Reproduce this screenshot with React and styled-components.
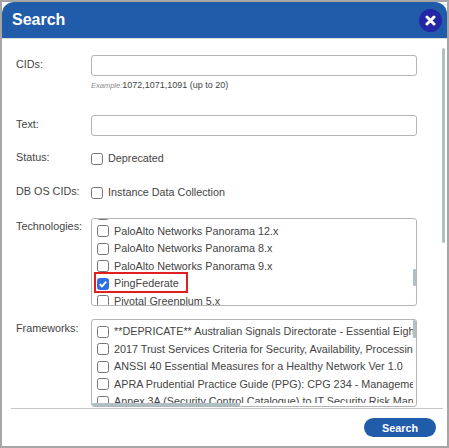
import styled, {createGlobalStyle} from 'styled-components';

const Global = createGlobalStyle`
  html, body { margin: 0; padding: 0; background: #fff; }
  body { font-family: "Liberation Sans", Arial, sans-serif; color: #444; }
`;

/* ---------- frame ---------- */
const Frame = styled.div`
  width: 449px; height: 448px; box-sizing: border-box;
  border: 2px solid #a6a6a6; background: #fff;
  display: flex; flex-direction: column; overflow: hidden;
`;
const Header = styled.header`
  height: 36px; flex: none; background: #205ca9;
  border-radius: 12px 12px 0 0; border-bottom: 1px solid #d9dee5;
  display: flex; align-items: center; justify-content: space-between;
  padding: 0 5px 0 10px;
`;
const Title = styled.h1`
  margin: 0; font-size: 16px; font-weight: 700; color: #fff;
`;
const Close = styled.button`
  width: 23px; height: 23px; padding: 0; border: none; border-radius: 50%;
  background: #2327a3; display: flex; align-items: center; justify-content: center;
`;

/* ---------- body ---------- */
const Body = styled.div`
  flex: 1; position: relative; overflow: hidden;
  padding: 16px 0 0 14px;
  display: flex; flex-direction: column;
`;
const PageThumb = styled.div`
  position: absolute; right: 2px; top: 9px;
  width: 3px; height: 195px; border-radius: 2px; background: #b0bec5;
`;
const Row = styled.div`
  display: flex; align-items: flex-start; height: ${p => p.$h}px; flex: none;
`;
const Label = styled.label`
  width: 75px; flex: none; font-size: 10.8px; line-height: 13px;
  padding-top: ${p => p.$top || 0}px; color: #444;
`;
const Field = styled.div`
  width: 326px; display: flex; flex-direction: column;
`;
const Input = styled.input`
  box-sizing: border-box; width: 326px; height: 21px;
  border: 1px solid #b5b5b5; border-radius: 3px; background: #fff; outline: none;
`;
const Hint = styled.div`
  margin-top: 4px; font-size: 9px; line-height: 11px; color: #444;
  em { font-size: 7.5px; color: #8a8a8a; }
`;
const Check = styled.label`
  display: flex; align-items: center; gap: 5px; font-size: 10.8px; line-height: 13px; color: #444;
  white-space: nowrap; height: ${p => p.$h || 17.5}px; flex: none;
`;
const Box = styled.span`
  width: 12px; height: 12px; box-sizing: border-box; flex: none;
  border: 1px solid #767676; border-radius: 2.5px; background: #fff;
  display: flex; align-items: center; justify-content: center;
  ${p => p.$on && 'background:#2f6fe4;border-color:#2f6fe4;'}
`;
const List = styled.div`
  box-sizing: border-box; width: 326px; height: 88px;
  border: 1px solid #b5b5b5; border-radius: 3px; background: #fff;
  position: relative; overflow: hidden;
  display: flex; flex-direction: column;
`;
/* the part of a list that is left beside its scrollbars */
const Viewport = styled.div`
  flex: 1; min-height: 0; overflow: hidden;
  margin: 0 3px ${p => p.$hbar ? 3 : 0}px 0;
  padding: ${p => p.$top}px 0 0 5px;
`;
const Clipped = styled(Check)`
  margin-top: -14.25px;
`;
const Thumb = styled.div`
  position: absolute; background: #b0bec5; border-radius: 1px;
  ${p => p.$h ? `right:0;top:${p.$top}px;width:3px;height:${p.$h}px;` : `left:0;bottom:0;height:3px;width:${p.$w}px;`}
`;
const Marker = styled.div`
  position: absolute; left: 2px; top: 53px; width: 94px; height: 21px;
  box-sizing: border-box; border: 2px solid #e0201f;
`;

/* ---------- footer ---------- */
const Footer = styled.footer`
  height: 38px; flex: none; margin: 0 4px 0 9px;
  border-top: 1px solid #c9c9c9; box-sizing: border-box;
  display: flex; justify-content: flex-end; align-items: flex-start;
  padding: 9px 7px 0 0;
`;
const SearchBtn = styled.button`
  width: 72px; height: 19px; padding: 0; border: none; border-radius: 10px;
  background: #205ca9; color: #fff; font: 700 10.8px "Liberation Sans", Arial, sans-serif;
`;

const tech = [
  'PaloAlto Networks Panorama 12.x',
  'PaloAlto Networks Panorama 8.x',
  'PaloAlto Networks Panorama 9.x',
  'PingFederate',
  'Pivotal Greenplum 5.x',
];
const frameworks = [
  '**DEPRICATE** Australian Signals Directorate - Essential Eight',
  '2017 Trust Services Criteria for Security, Availability, Processing Integrity',
  'ANSSI 40 Essential Measures for a Healthy Network Ver 1.0',
  'APRA Prudential Practice Guide (PPG): CPG 234 - Management of Security Risk',
  'Annex 3A (Security Control Catalogue) to IT Security Risk Management',
];

const Tick = () => (
  <svg width="10" height="10" viewBox="0 0 10 10">
    <path d="M1.8 5.2 4 7.4 8.2 2.6" fill="none" stroke="#fff" strokeWidth="1.8"/>
  </svg>
);

export default function App() {
  return (
    <Frame>
      <Global/>
      <Header>
        <Title>Search</Title>
        <Close aria-label="Close">
          <svg width="11" height="11" viewBox="0 0 11 11">
            <path d="M2 2 9 9M9 2 2 9" stroke="#fff" strokeWidth="3" strokeLinecap="round"/>
          </svg>
        </Close>
      </Header>
      <Body>
        <PageThumb/>
        <Row $h={60}>
          <Label $top={3}>CIDs:</Label>
          <Field>
            <Input/>
            <Hint><em>Example:</em>1072,1071,1091 (up to 20)</Hint>
          </Field>
        </Row>
        <Row $h={36}>
          <Label $top={3}>Text:</Label>
          <Field><Input/></Field>
        </Row>
        <Row $h={34}>
          <Label>Status:</Label>
          <Check $h={15}><Box/>Deprecated</Check>
        </Row>
        <Row $h={33}>
          <Label>DB OS CIDs:</Label>
          <Check $h={15}><Box/>Instance Data Collection</Check>
        </Row>
        <Row $h={101}>
          <Label $top={2}>Technologies:</Label>
          <List>
            <Viewport $top={0}>
              <Clipped><Box/></Clipped>
              {tech.map(t => (
                <Check key={t}><Box $on={t === 'PingFederate'}>{t === 'PingFederate' && <Tick/>}</Box>{t}</Check>
              ))}
            </Viewport>
            <Thumb $top={50} $h={17}/>
            <Marker/>
          </List>
        </Row>
        <Row $h={89}>
          <Label $top={3}>Frameworks:</Label>
          <List>
            <Viewport $top={3} $hbar>
              {frameworks.map(t => (
                <Check key={t}><Box/>{t}</Check>
              ))}
            </Viewport>
            <Thumb $top={0} $h={18}/>
            <Thumb $w={148}/>
          </List>
        </Row>
      </Body>
      <Footer><SearchBtn>Search</SearchBtn></Footer>
    </Frame>
  );
}
